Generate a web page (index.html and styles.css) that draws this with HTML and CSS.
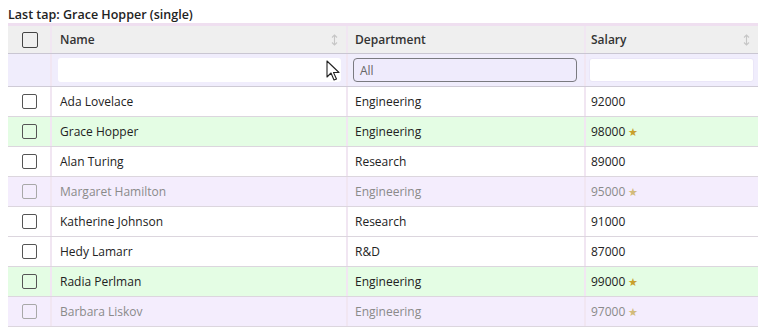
FILE: index.html
```html
<!DOCTYPE html>
<html lang="en">
<head>
<meta charset="utf-8">
<title>Table</title>
<link rel="stylesheet" href="styles.css">
</head>
<body>
<div class="page">
  <div class="caption">Last tap: Grace Hopper (single)</div>
  <div class="table">
    <div class="row head">
      <div class="cell check"><span class="box"></span></div>
      <div class="cell name"><span>Name</span><svg class="sort" width="7" height="12" viewBox="0 0 7 12"><path d="M3.5 1 V11 M1 3.5 L3.5 1 L6 3.5 M1 8.5 L3.5 11 L6 8.5" fill="none" stroke="#c6c6c6" stroke-width="1.1"/></svg></div>
      <div class="cell dept"><span>Department</span></div>
      <div class="cell sal"><span>Salary</span><svg class="sort" width="7" height="12" viewBox="0 0 7 12"><path d="M3.5 1 V11 M1 3.5 L3.5 1 L6 3.5 M1 8.5 L3.5 11 L6 8.5" fill="none" stroke="#c6c6c6" stroke-width="1.1"/></svg></div>
    </div>
    <div class="row filter">
      <div class="cell check"></div>
      <div class="cell name"><div class="input plain"></div></div>
      <div class="cell dept"><div class="input select">All</div></div>
      <div class="cell sal"><div class="input soft"></div></div>
    </div>
    <div class="row">
      <div class="cell check"><span class="box"></span></div>
      <div class="cell name">Ada Lovelace</div>
      <div class="cell dept">Engineering</div>
      <div class="cell sal">92000</div>
    </div>
    <div class="row green">
      <div class="cell check"><span class="box"></span></div>
      <div class="cell name">Grace Hopper</div>
      <div class="cell dept">Engineering</div>
      <div class="cell sal">98000 <span class="star">★</span></div>
    </div>
    <div class="row">
      <div class="cell check"><span class="box"></span></div>
      <div class="cell name">Alan Turing</div>
      <div class="cell dept">Research</div>
      <div class="cell sal">89000</div>
    </div>
    <div class="row dim">
      <div class="cell check"><span class="box"></span></div>
      <div class="cell name">Margaret Hamilton</div>
      <div class="cell dept">Engineering</div>
      <div class="cell sal">95000 <span class="star">★</span></div>
    </div>
    <div class="row">
      <div class="cell check"><span class="box"></span></div>
      <div class="cell name">Katherine Johnson</div>
      <div class="cell dept">Research</div>
      <div class="cell sal">91000</div>
    </div>
    <div class="row">
      <div class="cell check"><span class="box"></span></div>
      <div class="cell name">Hedy Lamarr</div>
      <div class="cell dept">R&amp;D</div>
      <div class="cell sal">87000</div>
    </div>
    <div class="row green">
      <div class="cell check"><span class="box"></span></div>
      <div class="cell name">Radia Perlman</div>
      <div class="cell dept">Engineering</div>
      <div class="cell sal">99000 <span class="star">★</span></div>
    </div>
    <div class="row dim">
      <div class="cell check"><span class="box"></span></div>
      <div class="cell name">Barbara Liskov</div>
      <div class="cell dept">Engineering</div>
      <div class="cell sal">97000 <span class="star">★</span></div>
    </div>
    <svg class="cursor" width="14" height="22" viewBox="0 0 14 22"><path d="M1 1 L1 17 L5 13 L8 20 L10.5 19 L7.5 12.5 L13 12.5 Z" fill="#fff" stroke="#222" stroke-width="1.1" stroke-linejoin="round"/></svg>
  </div>
</div>
</body>
</html>
```

FILE: styles.css
```css
html, body {
  margin: 0;
  padding: 0;
  background: #ffffff;
}
.page {
  padding: 7px 8px 0 8px;
  font-family: "Open Sans", "Noto Sans", sans-serif;
  font-size: 12px;
  color: #222;
}
.caption {
  font-weight: 600;
  font-size: 12.5px;
  line-height: 16px;
  height: 16px;
}
.table {
  position: relative;
  width: 750px;
}
.row {
  display: grid;
  grid-template-columns: 42px 296px 238px 174px;
  height: 30px;
  border-bottom: 1px solid #dcd6de;
  box-sizing: border-box;
  background: #ffffff;
}
.cell {
  display: flex;
  align-items: center;
  box-sizing: border-box;
  padding-left: 10px;
  min-width: 0;
}
.cell + .cell {
  border-left: 2px solid #f1e6f2;
}
.cell.name { padding-left: 8px; }
.cell.dept { padding-left: 7px; }
.cell.sal { padding-left: 5px; }
.check {
  justify-content: center;
  padding-left: 0;
}
.box {
  width: 13px;
  height: 13px;
  border: 1.6px solid #555;
  border-radius: 2px;
  background: #fff;
  margin-left: 1px;
}
.head {
  height: 31px;
  border-top: 3px solid #efdff0;
  background: #efefef;
  border-bottom: 1px solid #c9c6d2;
  font-weight: 600;
  color: #333;
}
.head .cell { justify-content: space-between; padding-right: 8px; }
.head .check { justify-content: center; padding-right: 0; }
.head .box {
  background: transparent;
  width: 14px;
  height: 14px;
  border-width: 1.8px;
  border-color: #444;
  margin-left: 2px;
}
.sort {
  display: block;
  margin-top: 1px;
}
.filter {
  height: 33px;
  background: #f0edfc;
  border-bottom: 1px solid #cfcbd6;
}
.filter .name { padding-left: 6px; padding-right: 5px; }
.filter .dept { padding-left: 5px; padding-right: 7px; }
.filter .sal { padding-left: 3px; padding-right: 4px; }
.input {
  flex: 1;
  height: 24px;
  box-sizing: border-box;
  background: #fff;
  border-radius: 3px;
}
.input.select {
  background: #efebfc;
  border: 1px solid #7a7a80;
  border-radius: 4px;
  padding-left: 6px;
  display: flex;
  align-items: center;
  color: #666;
}
.input.soft {
  border: 1px solid #eae6f8;
}
.green { background: #e4fde4; }
.dim { background: #f4edfd; color: #8a8a8a; }
.dim .box { border-color: #a8a8a8; background: transparent; }
.green .box { background: transparent; }
.star {
  color: #c9a02c;
  font-size: 10.5px;
  margin-left: 3px;
}
.dim .star { color: #d2bb7a; }
.cursor {
  position: absolute;
  left: 318px;
  top: 37px;
}
```
